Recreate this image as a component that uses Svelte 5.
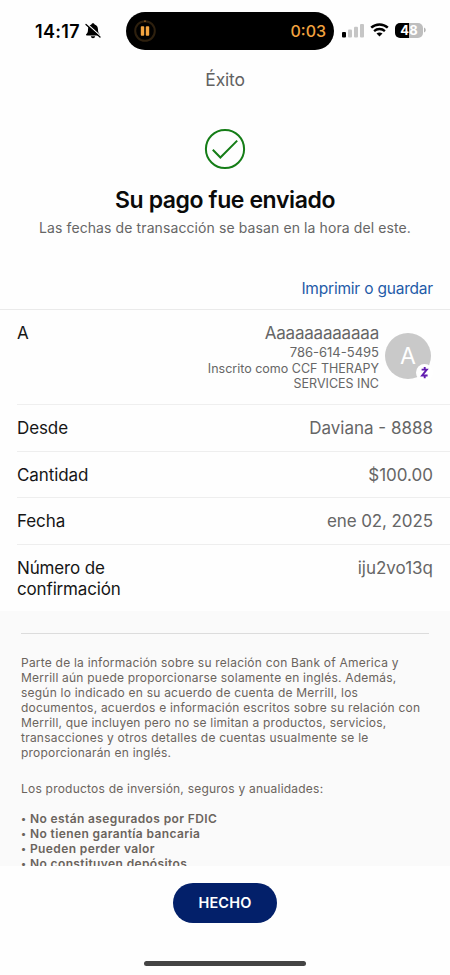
<script lang="ts">
  const details = [
    { label: "Desde", value: "Daviana - 8888", kind: "from" },
    { label: "Cantidad", value: "$100.00", kind: "amount" },
    { label: "Fecha", value: "ene 02, 2025", kind: "date" },
    { label: "Número de confirmación", value: "iju2vo13q", kind: "confirmation" },
  ];

  const disclosure = [
    "Parte de la información sobre su relación con Bank of America y",
    "Merrill aún puede proporcionarse solamente en inglés. Además,",
    "según lo indicado en su acuerdo de cuenta de Merrill, los",
    "documentos, acuerdos e información escritos sobre su relación con",
    "Merrill, que incluyen pero no se limitan a productos, servicios,",
    "transacciones y otros detalles de cuentas usualmente se le",
    "proporcionarán en inglés.",
  ];

  const warnings = [
    "No están asegurados por FDIC",
    "No tienen garantía bancaria",
    "Pueden perder valor",
    "No constituyen depósitos",
  ];
</script>

<div class="screen">
  <div class="status-bar">
    <div class="clock">
      <span class="time">14:17</span>
      <svg width="16" height="18" viewBox="0 0 16 18" aria-hidden="true">
        <path d="M8 1.2c-.9 0-1.5.6-1.6 1.4C4.2 3.3 3 5 3 7.4c0 2.8-.7 3.7-1.7 4.7-.5.5-.3 1.3.4 1.3h12.6c.7 0 .9-.8.4-1.3-1-1-1.7-1.9-1.7-4.7 0-2.4-1.2-4.1-3.4-4.8C9.5 1.8 8.9 1.2 8 1.2zM5.8 14.3c.2 1.2 1.1 1.9 2.2 1.9s2-.7 2.2-1.9z" fill="#000" />
        <path d="M1.6 1.5l13.8 12.4" stroke="#fff" stroke-width="1.4" />
        <path d="M1 2.4l14 12.6" stroke="#000" stroke-width="1.3" stroke-linecap="round" />
      </svg>
    </div>
    <div class="island">
      <svg width="22" height="22" viewBox="0 0 22 22" aria-hidden="true">
        <circle cx="11" cy="11" r="9.8" fill="none" stroke="#2e200e" stroke-width="2" />
        <circle cx="11" cy="1.2" r="1" fill="#80521c" />
        <rect x="6.8" y="6.2" width="3.4" height="9.6" rx="0.8" fill="#f4a540" />
        <rect x="11.8" y="6.2" width="3.4" height="9.6" rx="0.8" fill="#f4a540" />
      </svg>
      <span class="timer">0:03</span>
    </div>
    <div class="indicators">
      <svg width="22" height="15" viewBox="0 0 22 15" aria-hidden="true">
        <rect x="0" y="9" width="4" height="5.5" rx="1" fill="#000" />
        <rect x="6" y="6.5" width="4" height="8" rx="1" fill="#c6c6c6" />
        <rect x="12" y="3.8" width="4" height="10.7" rx="1" fill="#c6c6c6" />
        <rect x="18" y="1" width="4" height="13.5" rx="1" fill="#c6c6c6" />
      </svg>
      <svg class="wifi" width="19" height="14" viewBox="0 0 19 14" aria-hidden="true">
        <path d="M1.2 4.7c4.7-4.3 11.9-4.3 16.6 0" fill="none" stroke="#000" stroke-width="2.5" />
        <path d="M4.1 8.1c3-2.8 7.8-2.8 10.8 0" fill="none" stroke="#000" stroke-width="2.3" />
        <path d="M6.5 10.6c1.7-1.6 4.3-1.6 6 0l-3 3z" fill="#000" />
      </svg>
      <div class="battery"><span>48</span></div>
      <svg class="cap" width="2" height="6" viewBox="0 0 2 6" aria-hidden="true">
        <path d="M0 0.5c2.3 1 2.3 4 0 5z" fill="#b5b5b5" />
      </svg>
    </div>
  </div>

  <header class="nav-title">Éxito</header>

  <section class="hero">
    <svg width="42" height="42" viewBox="0 0 42 42" aria-hidden="true">
      <circle cx="21" cy="21" r="19.1" fill="none" stroke="#157d17" stroke-width="2" />
      <path d="M8.8 21.7l7.6 7.8L33.2 12.6" fill="none" stroke="#157d17" stroke-width="2" />
    </svg>
    <h1>Su pago fue enviado</h1>
    <p>Las fechas de transacción se basan en la hora del este.</p>
  </section>

  <div class="print"><a href="#print">Imprimir o guardar</a></div>

  <section class="recipient">
    <span class="label">A</span>
    <div class="payee">
      <strong>Aaaaaaaaaaaa</strong>
      <span class="phone">786-614-5495</span>
      <span class="enrolled">Inscrito como CCF THERAPY<br />SERVICES INC</span>
    </div>
    <div class="avatar">
      <span>A</span>
      <svg class="zelle" width="17" height="17" viewBox="0 0 17 17" aria-hidden="true">
        <circle cx="8.5" cy="8.5" r="8.5" fill="#fff" />
        <path d="M5.6 5.6h5.2l-4.7 5.9h5.5M8.7 3v2.4M8.7 11.8v2.5" fill="none" stroke="#621cb0" stroke-width="1.9" />
      </svg>
    </div>
  </section>

  {#each details as item (item.kind)}
    <div class={`row ${item.kind}`}>
      <span class="label">{item.label}</span>
      <span class="value">{item.value}</span>
    </div>
  {/each}

  <section class="legal">
    <p class="disclosure">
      {#each disclosure as line}
        <span>{line}</span>
      {/each}
    </p>
    <p class="products">Los productos de inversión, seguros y anualidades:</p>
    <ul>
      {#each warnings as warning}
        <li>{warning}</li>
      {/each}
    </ul>
  </section>

  <footer>
    <button type="button">HECHO</button>
    <div class="home-indicator"></div>
  </footer>
</div>

<style>
  :global(body) {
    margin: 0;
    background: #fff;
  }

  .screen {
    display: flex;
    flex-direction: column;
    width: 450px;
    height: 975px;
    overflow: hidden;
    background: #fefefe;
    color: #161616;
    font-family: Inter, "Liberation Sans", sans-serif;
  }

  .screen > * {
    box-sizing: border-box;
    flex-shrink: 0;
  }

  .status-bar {
    display: grid;
    grid-template-columns: 126px 208px 1fr;
    height: 62px;
    padding-top: 12px;
  }

  .clock {
    display: flex;
    align-items: center;
    gap: 4px;
    height: 38px;
    padding-left: 35px;
    color: #000;
  }

  .time {
    width: 46px;
    font-size: 18px;
    font-weight: 600;
    letter-spacing: 0.3px;
    white-space: nowrap;
  }

  .island {
    display: flex;
    align-items: center;
    justify-content: space-between;
    box-sizing: border-box;
    height: 38px;
    padding: 0 8px;
    border-radius: 19px;
    background: #000;
  }

  .timer {
    color: #f2a33f;
    font-size: 16px;
    font-weight: 500;
  }

  .indicators {
    display: flex;
    align-items: center;
    height: 36px;
    padding-left: 8px;
  }

  .wifi {
    margin-left: 6px;
  }

  .battery {
    width: 28px;
    height: 15px;
    margin-left: 6px;
    border-radius: 5px;
    background: linear-gradient(90deg, #000 49%, #bebebe 49%);
    color: #fff;
    font-size: 13px;
    font-weight: 700;
    line-height: 15px;
    text-align: center;
  }

  .cap {
    margin-left: 1px;
  }

  .nav-title {
    height: 66px;
    padding-top: 6px;
    color: #626262;
    font-size: 17.5px;
    line-height: 23px;
    letter-spacing: -0.2px;
    text-align: center;
  }

  .hero {
    display: flex;
    flex-direction: column;
    align-items: center;
    height: 138px;
  }

  h1 {
    margin: 15px 0 0;
    color: #0a0a0a;
    font-size: 23px;
    font-weight: 600;
    line-height: 30px;
    letter-spacing: -0.4px;
  }

  .hero p {
    margin: 4px 0 0;
    color: #666;
    font-size: 14px;
    line-height: 18px;
    letter-spacing: 0.1px;
    white-space: nowrap;
  }

  .print {
    height: 44px;
    padding: 12px 17px 0 0;
    border-bottom: 1px solid #eaeaea;
    font-size: 15.5px;
    line-height: 22px;
    letter-spacing: -0.2px;
    text-align: right;
  }

  a {
    color: #1e5ba8;
    text-decoration: none;
  }

  .recipient {
    display: flex;
    height: 95px;
    margin-left: 17px;
    padding: 13px 19px 0 0;
    border-bottom: 1px solid #efefef;
  }

  .label {
    font-size: 17px;
    line-height: 21px;
    letter-spacing: -0.1px;
  }

  .payee {
    display: flex;
    flex: 1;
    flex-direction: column;
    align-items: flex-end;
    color: #666;
    font-size: 12.5px;
    text-align: right;
  }

  .payee strong {
    font-size: 17px;
    font-weight: 400;
    line-height: 21px;
    letter-spacing: -0.2px;
  }

  .phone {
    font-size: 13px;
    line-height: 16px;
  }

  .enrolled {
    padding-top: 1px;
    line-height: 15px;
  }

  .avatar {
    position: relative;
    width: 46px;
    height: 46px;
    margin: 10px 0 0 6px;
    border-radius: 50%;
    background: #c9c9c9;
    color: #fff;
    font-size: 23px;
    line-height: 47px;
    text-align: center;
  }

  .zelle {
    position: absolute;
    right: -2px;
    bottom: -2px;
  }

  .row {
    display: flex;
    justify-content: space-between;
    height: 47px;
    margin-left: 17px;
    padding: 13px 17px 0 0;
    border-bottom: 1px solid #eee;
  }

  .row.amount {
    height: 46px;
  }

  .row.confirmation {
    height: 66px;
    border-bottom: 0;
  }

  .row.confirmation .label {
    width: 120px;
    letter-spacing: -0.15px;
  }

  .value {
    color: #666;
    font-size: 17px;
    line-height: 21px;
  }

  .row.date .value {
    letter-spacing: -0.1px;
  }

  .legal {
    height: 255px;
    padding: 22px 21px 0;
    overflow: hidden;
    background: #fafafa;
    color: #6b645d;
    font-size: 12px;
    line-height: 15px;
    letter-spacing: 0.22px;
  }

  .legal p {
    margin: 0;
  }

  .legal .disclosure {
    padding-top: 21px;
    border-top: 1px solid #dcdcdc;
  }

  .disclosure span {
    display: block;
    white-space: nowrap;
  }

  .legal .products {
    margin-top: 21px;
  }

  ul {
    margin: 15px 0 0;
    padding: 0;
    list-style: none;
    font-weight: 600;
    letter-spacing: 0.38px;
  }

  li {
    display: flex;
    height: 15px;
  }

  li::before {
    width: 9px;
    content: "•";
    font-size: 10px;
  }

  footer {
    display: flex;
    flex: 1;
    flex-direction: column;
    align-items: center;
    padding-top: 17px;
  }

  button {
    width: 104px;
    height: 40px;
    padding: 0 0 1px;
    border: 0;
    border-radius: 20px;
    background: #03206a;
    color: #fff;
    font-family: inherit;
    font-size: 14.5px;
    font-weight: 600;
    letter-spacing: 0.2px;
  }

  .home-indicator {
    width: 162px;
    height: 5px;
    margin-top: 38px;
    border-radius: 3px;
    background: #444;
  }
</style>
